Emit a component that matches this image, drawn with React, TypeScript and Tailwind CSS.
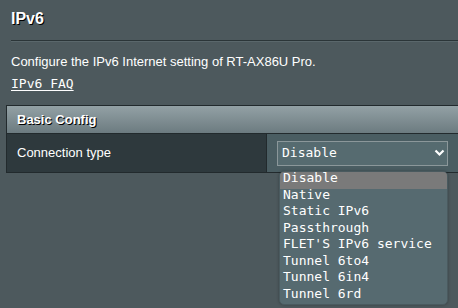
import React from "react";

const options = [
  "Disable",
  "Native",
  "Static IPv6",
  "Passthrough",
  "FLET'S IPv6 service",
  "Tunnel 6to4",
  "Tunnel 6in4",
  "Tunnel 6rd",
];

export default function App() {
  return (
    <div className="relative w-[458px] h-[308px] overflow-hidden bg-[#4d595d] text-white font-['Liberation_Sans',Arial,sans-serif]">
      <div className="pl-[11px] pt-[10px] text-[16px] leading-[18px] font-bold [text-shadow:1px_1px_0_#000]">
        IPv6
      </div>
      <div className="ml-[11px] mt-[12px] w-[460px] h-px bg-[#2b3538]" />
      <div className="ml-[11px] w-[460px] h-px bg-[#5a676b]" />
      <div className="pl-[11px] mt-[12px] text-[13px] leading-[16px]">
        Configure the IPv6 Internet setting of RT-AX86U Pro.
      </div>
      <div className="pl-[11px] mt-[6px] text-[13px] leading-[16px] font-['DejaVu_Sans_Mono',monospace] underline underline-offset-[2px]">
        IPv6 FAQ
      </div>
      <div className="ml-[6px] mt-[13px] w-[470px] border border-[#222a2d]">
        <div className="h-[28px] flex items-center pl-[10px] bg-[linear-gradient(#93a1a5,#6c7b80)] border-b border-[#222a2d] text-[13px] font-bold [text-shadow:1px_1px_0_#000]">
          Basic Config
        </div>
        <div className="h-[38px] flex">
          <div className="w-[260px] bg-[#2e393d] border-r border-[#222a2d] flex items-center pl-[10px] text-[13px]">
            Connection type
          </div>
          <div className="flex-1 bg-[#4a5d62] flex items-center pl-[10px]">
            <div className="w-[171px] h-[25px] border border-[#8b979a] bg-[#566b70] flex items-center justify-between pl-[4px] pr-[2px] text-[13px] font-['DejaVu_Sans_Mono',monospace]">
              <span>Disable</span>
              <svg width="11" height="8" viewBox="0 0 11 8">
                <polyline points="1.5,1.5 5.5,5.5 9.5,1.5" fill="none" stroke="#fff" strokeWidth="2.2" />
              </svg>
            </div>
          </div>
        </div>
      </div>
      <div className="absolute left-[279px] top-[171px] w-[169px] rounded-[5px] bg-[#566a70] border border-[#4a5a5f] overflow-hidden shadow-[0_0_3px_rgba(0,0,0,0.3)] font-['DejaVu_Sans_Mono',monospace] text-[13px]">
        {options.map((o, i) => (
          <div
            key={o}
            className={
              i === 0
                ? "h-[16.5px] leading-[11px] pl-[3px] bg-[#7a7a7a] whitespace-nowrap"
                : "h-[16.5px] leading-[11px] pl-[3px] whitespace-nowrap"
            }
          >
            {o}
          </div>
        ))}
      </div>
    </div>
  );
}
